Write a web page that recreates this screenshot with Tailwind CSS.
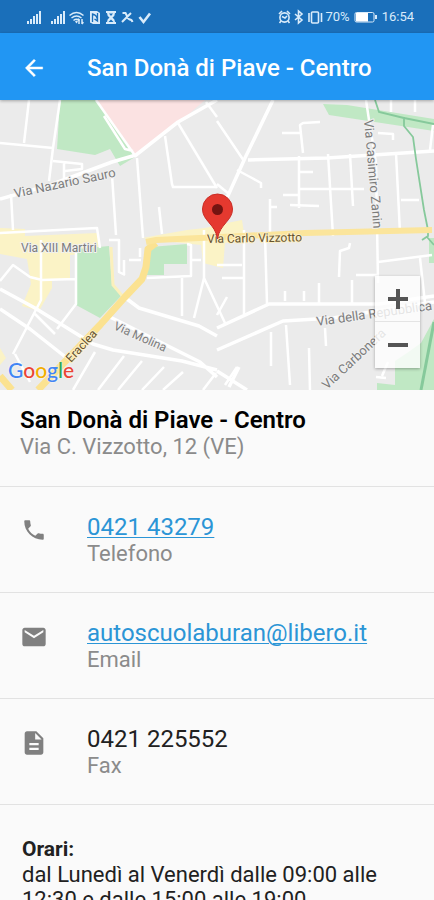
<!DOCTYPE html>
<html lang="it">
<head>
<meta charset="utf-8">
<meta name="viewport" content="width=device-width, initial-scale=1">
<title>San Donà di Piave - Centro</title>
<script src="https://cdn.jsdelivr.net/npm/@tailwindcss/browser@4"></script>
</head>
<body class="flex h-screen flex-col overflow-hidden bg-[#fafafa] font-[Roboto,'Liberation_Sans',sans-serif] text-[#212121]">

<!-- Status bar -->
<div class="flex h-[33px] shrink-0 items-center justify-between bg-[#1a6fba] pr-5 pl-6 text-[#d9ebfa]">
  <svg class="h-4 w-32" viewBox="0 0 128 16" fill="currentColor" aria-hidden="true">
    <path d="M3 12h2v3H3zM6 10h2v5H6zM9 7h2v8H9zM12 5h2v10h-2zM15 2h2v13h-2z"/>
    <path d="M27 12h2v3h-2zM30 10h2v5h-2zM33 7h2v8h-2zM36 5h2v10h-2zM39 2h2v13h-2z"/>
    <g fill="none" stroke="currentColor" stroke-width="1.500">
      <path d="M45.500 6.500q7-6 14 0M47.500 9q5-4 10 0M49.500 11.500q3-2.500 6 0"/>
      <path d="M55 15v-5M58 15v-5M53.700 11.500l1.300-1.800M59.300 13l-1.300 2"/>
    </g>
    <path d="M51 12.500l1.500-1 1.500 1-1.500 2z"/>
    <path d="M66 2h7l3 2v11h-7l-3-1.500z"/>
    <path d="M68.500 13V5q5 1 5 7M73.500 4v8l-3-2" fill="none" stroke="#1a6fba" stroke-width="1.300"/>
    <path d="M82 2h10v2h-1q0 3-2.500 4.500Q91 10 91 13h1v2H82v-2h1q0-3 2.500-4.500Q83 7 83 4h-1z"/>
    <path d="M85 4.500h4l-2 2.500zM84.500 13l2.500-2.500 2.500 2.500z" fill="#1a6fba"/>
    <path d="M98 13l9-9M98.500 4h3l1.500 3M103 8.500l2.500 2q2-.5 3 2.500" fill="none" stroke="currentColor" stroke-width="2"/>
    <path d="M115.500 8l4 5 6.500-8.500" fill="none" stroke="currentColor" stroke-width="2.600"/>
  </svg>
  <div class="flex items-center">
    <svg class="h-4 w-12" viewBox="0 0 48 16" fill="none" stroke="currentColor" stroke-width="1.600" aria-hidden="true">
      <circle cx="7.500" cy="8.500" r="4.600"/>
      <path d="M2 5l3-3M13 5l-3-3M5 7.500l3 1.500 2-2M4 12l-1.500 2M11 12l1.500 2"/>
      <path d="M18 5l7 6-3.500 3V2L25 5l-7 6"/>
      <rect x="34.500" y="3" width="7" height="11" rx="1"/>
      <path d="M32 4v9M44.500 4v9"/>
    </svg>
    <span class="text-[13px]">70%</span>
    <svg class="mx-1 h-4 w-6" viewBox="0 0 24 16" aria-hidden="true">
      <rect x="1" y="3.500" width="19" height="9.500" rx="1.500" fill="none" stroke="currentColor"/>
      <path d="M2 4h12v8.500H2z" fill="#fff"/>
      <path d="M21 6h2v4h-2z" fill="currentColor"/>
    </svg>
    <span class="text-[13px]">16:54</span>
  </div>
</div>

<!-- App bar -->
<header class="z-10 flex h-[67px] shrink-0 items-center bg-[#2196f3] pt-0.5 pl-[21px] text-white shadow-[0_1px_3px_rgba(0,0,0,0.3)]">
  <button type="button" aria-label="Indietro" class="mr-10 size-[26px]">
    <svg viewBox="0 0 24 24" fill="currentColor" stroke="currentColor" stroke-width=".4"><path d="M20 11H7.830l5.590-5.590L12 4l-8 8 8 8 1.410-1.410L7.830 13H20v-2z"/></svg>
  </button>
  <h1 class="text-2xl font-medium">San Donà di Piave - Centro</h1>
</header>

<main class="min-h-0 flex-1 overflow-y-auto [scrollbar-width:none]">

  <section aria-label="Mappa" class="relative h-[290px] overflow-hidden bg-[#ebebeb]">
    <svg class="h-full w-full" viewBox="0 0 434 290" preserveAspectRatio="xMidYMid slice" font-family="Roboto, sans-serif">
      <rect width="434" height="290" fill="#ebebeb"/>
      <!-- built-up areas -->
      <g fill="#fbf3c6">
        <path d="M0 128l25 1v7l73-3v20l-28 2v24H52v9l-13 23-17-5 9-22-4-25-27-5z"/>
        <path d="M142 138l45-8 18-2 17-4 20-4 3 20-20 3-2 25-20-5-2-18-47-5zM0 248l6 10-6 7z"/>
      </g>
      <!-- parks -->
      <g fill="#c0e8c4">
        <path d="M60 0h36l39 57-15 9-10-17-15 6-38-6z"/>
        <path d="M77 149l32-3 3 38 9 12-21 22-24-13z"/>
        <path d="M150 147l37-3v20h-23v11h-17z"/>
        <path d="M323 4l24 1 87 14v12l-105-16z"/>
        <path d="M429 138h5v25h-5zM377 283l18 2v-24l12-8 14-10 13-24v71h-57z"/>
      </g>
      <path d="M97 0h108l-31 27-38 29z" fill="#fbe2e2"/>
      <!-- minor streets -->
      <g fill="none" stroke="#fff" stroke-width="2.500" stroke-linejoin="round">
        <path d="M29 0l-5 43M0 43l53 5M60 0l-7 48-4 33M53 61l29 3v5l-17 2M64 63v19M11 94l2 36M0 133l97-5 3 20M112 75l4 60M137 58l6 80M159 107l3 27"/>
        <path d="M96 0l40 57M104 16l21 33 8 2M165 36l7 48 1 3h44M178 23l39 65M206 2l11 15"/>
        <path d="M217 21l27 40M217 84l12 10M237 70l15 8 9 5v5M320 22l-17 1-3 2 3 28M282 33h19M299 56v52M299 72h14M299 89h65M283 95h16M290 105l29 1M328 54l5 82M350 54l3 52M396 53l4 80M401 100h18M366 0l3 20 7 43 2 120M378 33l15 1v6M391 0v12M415 0v12M433 25l-3 25M270 99v34M270 107l7 0"/>
        <path d="M0 181l13-16 17 12 12 3 33-1M41 140v60l-28 54M76 149v55l-19 25M15 254l15 28M109 140h10v32l6 3M124 175v-15M140 148v9M129 160h12M187 144l4 1v31l-44 2M182 178v38M204 130v48l-10 40M191 160l10 0M204 178l21 45M35 214l20 20"/>
        <path d="M244 130v84M265 135l2 69M217 165h25M222 178h21M217 215l10-18M350 143l-1 5-9 3-1 26M378 162l54-7M356 175h22M352 180v23M285 191v10M304 191v10M319 183v20M420 158l5 45M271 232v34M286 225l4 60M325 228l1 18M309 248l1 42"/>
        <path d="M95 252l-22 38M124 256l-26 34M142 261l-24 29M164 267l-22 23M183 272l-20 18M216 273l-13 17M237 267l-12 18M388 262l-6 14M376 277l10 1"/>
      </g>
      <!-- main streets -->
      <g fill="none" stroke="#fff" stroke-width="3.500" stroke-linejoin="round">
        <path d="M0 99l50-14 62-23 24-7 42-33 39-22M273 0l-28 58-28 62M248 60l79-2 107-7"/>
        <path d="M0 189l35 19 58 36 20 6 69 11 35 9M0 209l30 20 38 30M123 196l16 12 60 18 18 10M108 216l92 46 17 15"/>
        <path d="M217 228l52-24h110l55-8M217 250l66-29 50-3 101-16M217 271l30 19M239 267l-10 20"/>
      </g>
      <!-- park paths -->
      <g fill="none" stroke="#86c99b" stroke-width="1.800">
        <path d="M375 0l4 12 25 6 30 6M404 17v9l9 11 3 22 8 51 4 20v6l-6 4M427 137l7 8"/>
        <path d="M434 222l-13 68" stroke-width="3"/>
      </g>
      <!-- provincial road -->
      <path d="M111 147l2 38 12 14" fill="none" stroke="#fbf0bc" stroke-width="3"/>
      <path d="M0 276l12 14M38 290l62-65 25-28 17-18 4-12 2-18 8-6" fill="none" stroke="#fbe291" stroke-width="7" stroke-linejoin="round"/>
      <path d="M146 142l10-2 65-3 84-4 127-3" fill="none" stroke="#fbe59c" stroke-width="6"/>
      <!-- street names -->
      <g font-size="13" fill="#7c7c7c" stroke="#f0f0f0" stroke-width="2" paint-order="stroke" stroke-linejoin="round">
        <text transform="translate(15 98) rotate(-12)">Via Nazario Sauro</text>
        <text transform="translate(364 20) rotate(85)">Via Casimiro Zanin</text>
        <text transform="translate(317 226) rotate(-8)">Via della Repubblica</text>
        <text transform="translate(327 290) rotate(-43)">Via Carbonera</text>
        <g font-size="12">
          <text x="21" y="152">Via XIII Martiri</text>
          <text transform="translate(113 229) rotate(24)">Via Molina</text>
        </g>
        <g font-size="12" fill="#65522e" stroke="#fcefc4">
          <text x="207" y="143" transform="rotate(-1 207 143)">Via Carlo Vizzotto</text>
          <text transform="translate(71 263) rotate(-47)">Eraclea</text>
        </g>
      </g>
      <!-- marker -->
      <path d="M217.500 139c-2-15-15-18-15-30a15 15 0 0 1 30 0c0 12-13 15-15 30z" fill="#e5392f" stroke="#c92d26"/>
      <circle cx="217.500" cy="109.500" r="5.500" fill="#741411"/>
    </svg>
    <div class="absolute bottom-[6px] left-2 font-[Lato,sans-serif] text-[21px] leading-7 font-medium [text-shadow:0_0_2px_white]" aria-label="Google"><span class="text-[#4285f4]">G</span><span class="text-[#ea4335]">o</span><span class="text-[#f2ad00]">o</span><span class="text-[#4285f4]">g</span><span class="text-[#34a853]">l</span><span class="text-[#ea4335]">e</span></div>
    <div class="absolute right-[14px] bottom-[22px] flex w-[45px] flex-col divide-y divide-[#e4e4e4] bg-white/80 text-[#555] shadow-[0_1px_3px_rgba(0,0,0,0.3)]">
      <button type="button" aria-label="Ingrandisci" class="flex h-[46px] items-center justify-center"><svg class="size-5" viewBox="0 0 20 20" stroke="currentColor" stroke-width="4"><path d="M0 10h20M10 0v20"/></svg></button>
      <button type="button" aria-label="Riduci" class="flex h-[46px] items-center justify-center"><svg class="size-5" viewBox="0 0 20 20" stroke="currentColor" stroke-width="4"><path d="M0 10h20"/></svg></button>
    </div>
  </section>

  <section class="h-[97px] border-b border-[#e2e2e2] px-5 pt-[17px]">
    <h2 class="text-2xl leading-[27px] font-semibold text-black">San Donà di Piave - Centro</h2>
    <p class="text-[22px] leading-[25px] text-[#8b8b8b]">Via C. Vizzotto, 12 (VE)</p>
  </section>

  <section class="flex h-[106px] gap-10 border-b border-[#e2e2e2] pt-[26px] pl-[21px]">
    <svg class="mt-1 size-[26px] shrink-0" viewBox="0 0 24 24" fill="#808080" aria-hidden="true"><path d="M6.620 10.790c1.440 2.830 3.760 5.140 6.590 6.590l2.200-2.200c.27-.27.67-.36 1.020-.24 1.120.37 2.330.57 3.570.57.550 0 1 .45 1 1V20c0 .55-.45 1-1 1-9.390 0-17-7.610-17-17 0-.55.450-1 1-1h3.500c.55 0 1 .45 1 1 0 1.250.2 2.450.57 3.570.11.350.03.740-.25 1.020l-2.200 2.200z"/></svg>
    <div>
      <a href="tel:042143279" class="block text-2xl leading-7 text-[#2b95d6] underline decoration-1 underline-offset-2">0421 43279</a>
      <p class="text-[22px] leading-[25px] text-[#8b8b8b]">Telefono</p>
    </div>
  </section>

  <section class="flex h-[106px] gap-10 border-b border-[#e2e2e2] pt-[26px] pl-[21px]">
    <svg class="mt-1 -mr-px -ml-px size-[28px] shrink-0" viewBox="0 0 24 24" fill="#808080" aria-hidden="true"><path d="M20 4H4c-1.100 0-1.990.9-1.990 2L2 18c0 1.100.9 2 2 2h16c1.100 0 2-.9 2-2V6c0-1.100-.9-2-2-2zm0 4l-8 5-8-5V6l8 5 8-5v2z"/></svg>
    <div>
      <a href="mailto:autoscuolaburan@libero.it" class="block text-2xl leading-7 text-[#2b95d6] underline decoration-1 underline-offset-2">autoscuolaburan@libero.it</a>
      <p class="text-[22px] leading-[25px] text-[#8b8b8b]">Email</p>
    </div>
  </section>

  <section class="flex h-[106px] gap-10 border-b border-[#e2e2e2] pt-[26px] pl-[21px]">
    <svg class="mt-1 -mr-px -ml-px size-[28px] shrink-0" viewBox="0 0 24 24" fill="#808080" aria-hidden="true"><path d="M14 2H6c-1.100 0-1.990.9-1.990 2L4 20c0 1.100.89 2 1.990 2H18c1.100 0 2-.9 2-2V8l-6-6zm2 16H8v-2h8v2zm0-4H8v-2h8v2zm-3-5V3.500L18.500 9H13z"/></svg>
    <div>
      <p class="text-2xl leading-7">0421 225552</p>
      <p class="text-[22px] leading-[25px] text-[#8b8b8b]">Fax</p>
    </div>
  </section>

  <section class="px-[22px] pt-8 pb-6 text-[22px] leading-[25px]">
    <h3 class="text-[21px] font-bold">Orari:</h3>
    <p>dal Lunedì al Venerdì dalle 09:00 alle 12:30 e dalle 15:00 alle 19:00</p>
  </section>
</main>
</body>
</html>
